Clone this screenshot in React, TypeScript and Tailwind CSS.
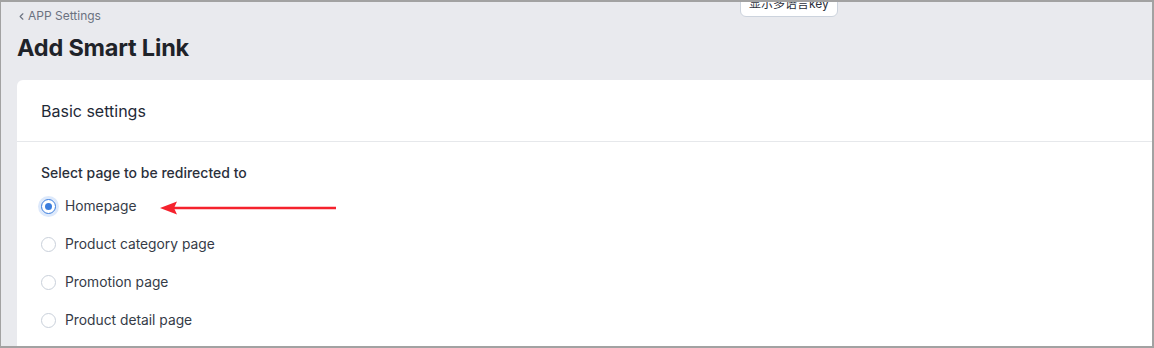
import { ChevronLeft } from 'lucide-react'

const options = ['Homepage', 'Product category page', 'Promotion page', 'Product detail page']

function Radio({ checked }: { checked: boolean }) {
  return checked ? (
    <span className="w-[15px] h-[15px] rounded-full border border-[#3b7ddd] bg-white flex items-center justify-center ring-[3px] ring-[#dde9fb] shrink-0">
      <span className="w-[7px] h-[7px] rounded-full bg-[#3b7ddd]" />
    </span>
  ) : (
    <span className="w-[15px] h-[15px] rounded-full border border-[#c9d0da] bg-white shrink-0" />
  )
}

export default function App() {
  return (
    <div
      className="relative w-[1154px] h-[348px] overflow-hidden bg-[#e9eaee] border-t-2 border-r-2 border-b-2 border-l border-[#a2a2a2] text-[#2b303b]"
      style={{ fontFamily: 'Inter, "Noto Sans CJK SC", sans-serif' }}
    >
      {/* key toggle button, cut off by the frame */}
      <button className="absolute top-[-13px] left-[739px] h-[28px] px-[8px] rounded-md border border-[#ccd3dd] bg-white text-[12px] leading-[28px] text-[#2b303b]">
        显示多语言key
      </button>

      <div className="pl-4 pt-[5px]">
        <div className="flex items-center h-[18px] text-[12px] text-[#6b7280]">
          <ChevronLeft className="w-[11px] h-[11px] -ml-[1px] mr-[1px]" strokeWidth={2.5} />
          <span>APP Settings</span>
        </div>
        <h1 className="mt-[8px] h-[30px] leading-[30px] text-[23.5px] font-bold text-[#1f2329] tracking-[-0.2px]">
          Add Smart Link
        </h1>

        <div className="mt-[17px] bg-white rounded-tl-md">
          <div className="h-[62px] flex items-center px-6 border-b border-[#e6e8eb] text-[16px] text-[#1f2937]">
            Basic settings
          </div>
          <div className="px-6 pt-[21px] pb-8">
            <div className="h-[20px] leading-[20px] text-[14px] font-medium text-[#2b303b]">
              Select page to be redirected to
            </div>
            <div className="mt-[4px]">
              {options.map((o, i) => (
                <label key={o} className="h-[38px] flex items-center gap-[9px] text-[13.8px] text-[#353b47]">
                  <Radio checked={i === 0} />
                  <span>{o}</span>
                </label>
              ))}
            </div>
          </div>
        </div>
      </div>

      {/* red annotation arrow */}
      <svg className="absolute left-[158px] top-[197px]" width="180" height="18" viewBox="0 0 180 18">
        <line x1="14" y1="9" x2="177" y2="9" stroke="#f5222d" strokeWidth="2.5" />
        <path d="M1 9 L18 2.5 L15 9 L18 15.5 Z" fill="#f5222d" />
      </svg>
    </div>
  )
}
